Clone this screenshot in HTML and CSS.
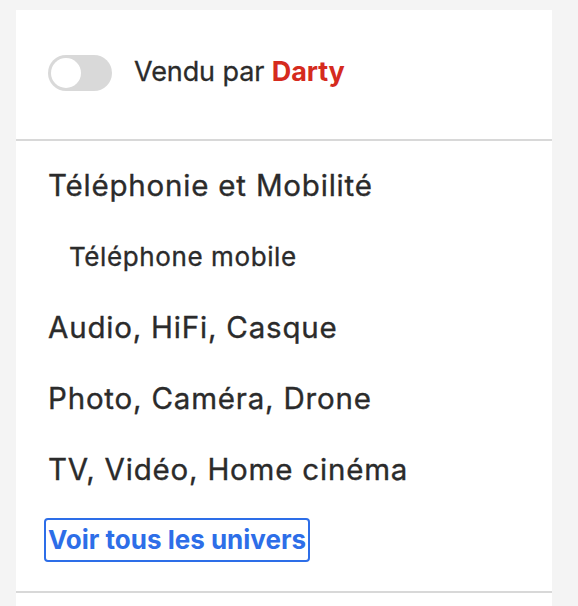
FILE: index.html
```html
<!DOCTYPE html>
<html lang="fr">
<head>
<meta charset="utf-8">
<link rel="stylesheet" href="styles.css">
</head>
<body>
<div class="panel">
  <div class="seller">
    <span class="toggle"><span class="knob"></span></span>
    <span class="seller-label">Vendu par <strong class="brand">Darty</strong></span>
  </div>
  <nav class="cats">
    <a class="cat" href="#">Téléphonie et Mobilité</a>
    <a class="cat sub" href="#">Téléphone mobile</a>
    <a class="cat" href="#">Audio, HiFi, Casque</a>
    <a class="cat" href="#">Photo, Caméra, Drone</a>
    <a class="cat" href="#">TV, Vidéo, Home cinéma</a>
    <div class="more-row"><a class="more" href="#">Voir tous les univers</a></div>
  </nav>
  <div class="after"></div>
</div>
</body>
</html>
```
FILE: styles.css
```css
html, body {
  margin: 0;
  padding: 0;
  background: #f4f4f4;
  font-family: Inter, "Noto Sans", sans-serif;
  color: #2b2b2b;
}
.panel {
  margin: 10px 0 0 16px;
  width: 536px;
  background: #fff;
  min-height: 596px;
}
.seller {
  display: flex;
  align-items: center;
  gap: 22px;
  padding: 45px 0 48px 32px;
  border-bottom: 2px solid #d8d8d8;
}
.toggle {
  display: inline-flex;
  align-items: center;
  width: 64px;
  height: 36px;
  border-radius: 18px;
  background: #d9d9d9;
  padding: 0 3px;
  box-sizing: border-box;
}
.knob {
  width: 30px;
  height: 30px;
  border-radius: 50%;
  background: #fff;
}
.seller-label {
  font-size: 27px;
  letter-spacing: -0.1px;
  -webkit-text-stroke: 0.3px #2b2b2b;
  position: relative;
  top: -2px;
}
.brand {
  color: #d52b1e;
  font-weight: 700;
  -webkit-text-stroke: 0;
}
.cats {
  display: flex;
  flex-direction: column;
  padding: 26px 0 29px 32px;
  border-bottom: 2px solid #d8d8d8;
}
.cat {
  display: block;
  color: #2b2b2b;
  text-decoration: none;
  font-size: 29.5px;
  letter-spacing: 0.8px;
  line-height: 36px;
  margin-bottom: 35px;
  -webkit-text-stroke: 0.35px #2b2b2b;
}
.cat.sub {
  font-size: 26px;
  padding-left: 21px;
  letter-spacing: 0.6px;
  position: relative;
  top: 1px;
}
.cat:nth-child(5) {
  margin-bottom: 31px;
}
.more-row {
  display: flex;
}
.more {
  color: #2d6ee8;
  font-weight: 700;
  font-size: 26px;
  letter-spacing: 0;
  text-decoration: none;
  line-height: 40px;
  padding: 0 2px;
  border: 2px solid #2d6ee8;
  border-radius: 4px;
  margin-left: -4px;
}
```
